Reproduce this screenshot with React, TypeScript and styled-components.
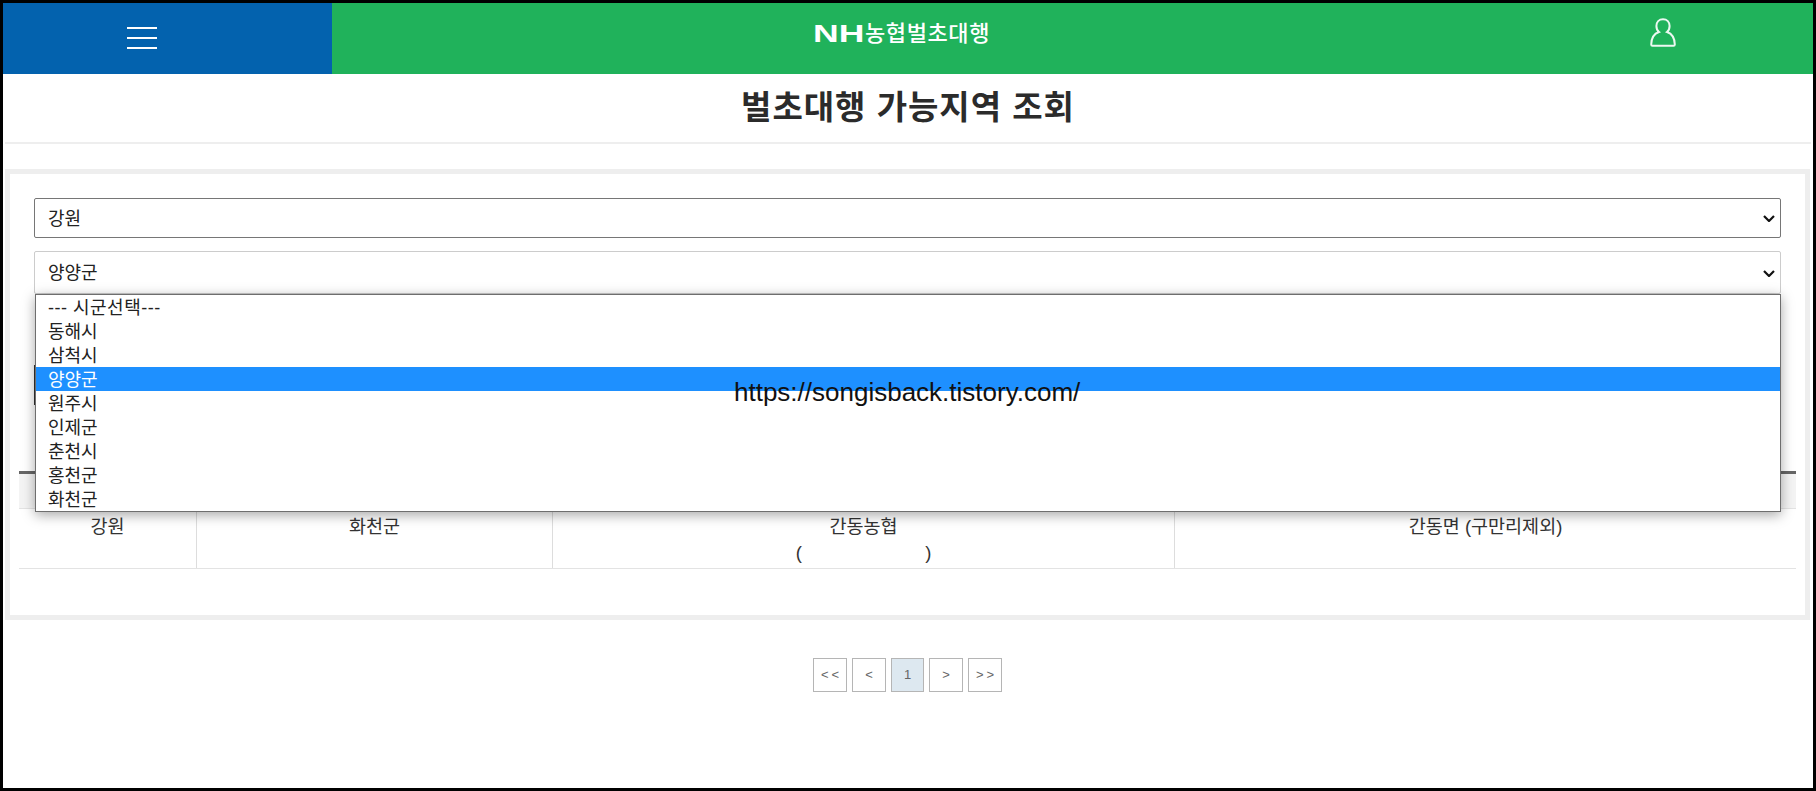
import React from 'react'
import styled, { createGlobalStyle } from 'styled-components'

const FONT = `"Liberation Sans", "Noto Sans CJK KR", sans-serif`

const GlobalStyle = createGlobalStyle`
  html, body {
    margin: 0;
    padding: 0;
    background: #fff;
    font-family: ${FONT};
  }
  * {
    box-sizing: border-box;
  }
`

const Frame = styled.div`
  position: relative;
  width: 1816px;
  height: 791px;
  border: 3px solid #000;
  overflow: hidden;
  background: #fff;
`

const Header = styled.header`
  display: flex;
  height: 71px;
  background: #20b25b;
`

const MenuArea = styled.div`
  display: flex;
  flex: 0 0 329px;
  align-items: center;
  padding-left: 124px;
  background: #0362ae;
`

const MenuIcon = styled.div`
  display: flex;
  flex-direction: column;
  gap: 8px;
  width: 30px;
  margin-top: -1px;

  span {
    display: block;
    height: 2px;
    background: #fff;
  }
`

const LogoArea = styled.div`
  display: flex;
  flex: 1;
  align-items: center;
  padding-left: 481px;
  padding-bottom: 9px;
  color: #fff;
`

const LogoMark = styled.span`
  display: inline-block;
  width: 52px;
  font-size: 24px;
  font-weight: 700;
  line-height: 1;
  transform: scaleX(1.48);
  transform-origin: left center;
`

const LogoText = styled.span`
  font-size: 22px;
  font-weight: 500;
  line-height: 1;
  letter-spacing: 0.6px;
`

const UserArea = styled.div`
  display: flex;
  flex: 0 0 326px;
  align-items: center;
  padding-left: 163px;
  padding-bottom: 12px;
`

const TitleBar = styled.div`
  height: 70px;
  margin: 0 2px;
  border-bottom: 2px solid #eee;
  text-align: center;
`

const Title = styled.h1`
  margin: 0;
  font-size: 33px;
  font-weight: 700;
  line-height: 68px;
  letter-spacing: 1px;
  color: #2b2b2b;
`

const Card = styled.section`
  position: relative;
  height: 451px;
  margin: 25px 3px 0 2px;
  padding: 24px 9px 0;
  border: 5px solid #eee;
`

const SelectWrap = styled.div<{ $muted?: boolean }>`
  position: relative;
  width: 1747px;
  height: ${p => (p.$muted ? '43px' : '40px')};
  margin: 0 0 13px 15px;

  svg {
    position: absolute;
    top: 50%;
    right: 6px;
    margin-top: -3px;
    pointer-events: none;
  }
`

const FieldSelect = styled.select<{ $muted?: boolean }>`
  display: block;
  width: 100%;
  height: 100%;
  padding: 1px 13px 0;
  border: 1px solid ${p => (p.$muted ? '#ccc' : '#767676')};
  border-radius: 2px;
  background: #fff;
  appearance: none;
  font-family: ${FONT};
  font-size: 18px;
  color: #222;
`

const SearchButton = styled.div`
  width: 120px;
  height: 40px;
  margin: 71px 0 0 15px;
  border-left: 1px solid #333;
`

const ListBox = styled.ul`
  position: absolute;
  top: 120px;
  left: 25px;
  z-index: 3;
  width: 1746px;
  margin: 0;
  padding: 0;
  list-style: none;
  background: #fff;
  border: 1px solid #6e6e6e;
  box-shadow: 0 3px 12px rgba(0, 0, 0, 0.35);
`

const ListItem = styled.li<{ $selected?: boolean; $spaced?: boolean }>`
  height: 24px;
  padding: 1px 0 0 12px;
  font-size: 18px;
  line-height: 24px;
  letter-spacing: ${p => (p.$spaced ? '0.5px' : '0')};
  color: ${p => (p.$selected ? '#fff' : '#222')};
  background: ${p => (p.$selected ? '#1e90ff' : 'transparent')};
`

const Table = styled.div`
  width: 1777px;
  margin-top: 66px;
  border-top: 3px solid #666;
`

const HeadRow = styled.div`
  height: 35px;
  background: #f4f4f4;
  border-bottom: 1px solid #e3e3e3;
`

const Row = styled.div`
  display: grid;
  grid-template-columns: 177px 356px 622px 1fr;
  height: 60px;
  border-bottom: 1px solid #e3e3e3;
`

const Cell = styled.div`
  padding-top: 5px;
  font-size: 18.5px;
  line-height: 26px;
  text-align: center;
  color: #333;

  & + & {
    border-left: 1px solid #ddd;
  }
`

const Blank = styled.span`
  display: inline-block;
  width: 113px;
`

const Pager = styled.nav`
  display: flex;
  justify-content: center;
  gap: 5px;
  margin-top: 38px;
  margin-left: -1px;
`

const PageButton = styled.a<{ $active?: boolean }>`
  display: flex;
  align-items: center;
  justify-content: center;
  width: ${p => (p.$active ? '33px' : '34px')};
  height: 34px;
  padding: 0 0 2px 3px;
  border: 1px solid #b5b5b5;
  font-size: 13px;
  letter-spacing: 3px;
  color: #666;
  background: ${p => (p.$active ? '#dde8f0' : '#fff')};
`

const Watermark = styled.div`
  position: absolute;
  top: 374px;
  left: 731px;
  z-index: 5;
  font-size: 26px;
  line-height: 30px;
  color: #111;
`

const options = ['--- 시군선택---', '동해시', '삼척시', '양양군', '원주시', '인제군', '춘천시', '홍천군', '화천군']
const pages = ['<<', '<', '1', '>', '>>']

const Chevron = () => (
  <svg width="12" height="7" viewBox="0 0 12 7" fill="none" stroke="#111" strokeWidth="2.2">
    <path d="M1 1l5 5 5-5" />
  </svg>
)

const App = () => {
  return (
    <Frame>
      <GlobalStyle />
      <Header>
        <MenuArea>
          <MenuIcon>
            <span />
            <span />
            <span />
          </MenuIcon>
        </MenuArea>
        <LogoArea>
          <LogoMark>NH</LogoMark>
          <LogoText>농협벌초대행</LogoText>
        </LogoArea>
        <UserArea>
          <svg width="26" height="30" viewBox="0 0 26 30" fill="none" stroke="#fff" strokeWidth="2" opacity="0.92">
            <path d="M13 1.2c-4 0-6.6 3-6.6 6.8 0 2.6 1 4.7 2.6 6-3.9 1.3-7.6 5-7.8 12.5 0 .8.4 1.3 1.2 1.3h21.2c.8 0 1.2-.5 1.2-1.3-.2-7.5-3.9-11.2-7.8-12.5 1.6-1.3 2.6-3.4 2.6-6 0-3.8-2.6-6.8-6.6-6.8z" />
          </svg>
        </UserArea>
      </Header>

      <TitleBar>
        <Title>벌초대행 가능지역 조회</Title>
      </TitleBar>

      <Card>
        <SelectWrap>
          <FieldSelect defaultValue="강원">
            <option>강원</option>
          </FieldSelect>
          <Chevron />
        </SelectWrap>
        <SelectWrap $muted>
          <FieldSelect $muted defaultValue="양양군">
            {options.map(o => (
              <option key={o}>{o}</option>
            ))}
          </FieldSelect>
          <Chevron />
        </SelectWrap>
        <ListBox>
          {options.map((o, i) => (
            <ListItem key={o} $selected={o === '양양군'} $spaced={i === 0}>
              {o}
            </ListItem>
          ))}
        </ListBox>
        <SearchButton />
        <Table>
          <HeadRow />
          <Row>
            <Cell>강원</Cell>
            <Cell>화천군</Cell>
            <Cell>
              간동농협
              <br />( <Blank /> )
            </Cell>
            <Cell>간동면 (구만리제외)</Cell>
          </Row>
        </Table>
      </Card>

      <Pager>
        {pages.map(p => (
          <PageButton key={p} $active={p === '1'}>
            {p}
          </PageButton>
        ))}
      </Pager>

      <Watermark>https://songisback.tistory.com/</Watermark>
    </Frame>
  )
}

export default App
